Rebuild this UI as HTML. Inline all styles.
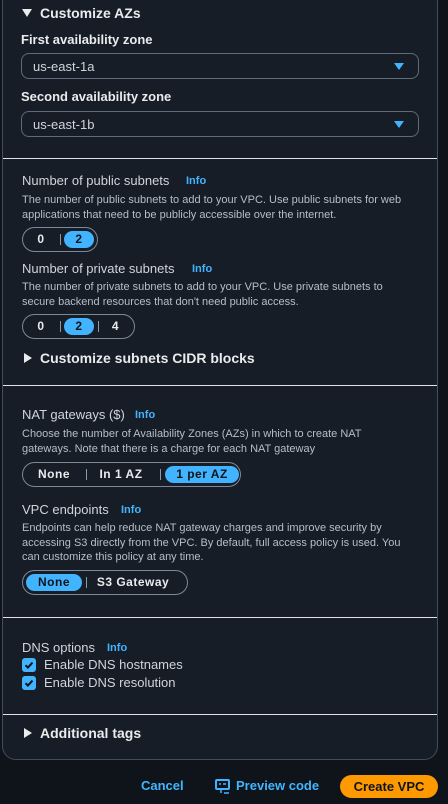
<!DOCTYPE html>
<html><head><style>
*{margin:0;padding:0;box-sizing:border-box}
body{width:448px;height:804px;background:#0f141a;font-family:"Liberation Sans",sans-serif;color:#d1d5db;position:relative;overflow:hidden}
.panel{position:absolute;left:2px;top:-20px;width:436px;height:780px;background:#161d26;border:1px solid #414d5c;border-radius:0 0 14px 14px}
.a{position:absolute;white-space:nowrap}
.h{font-weight:bold;font-size:14px;color:#e9ebed}
.lb{font-weight:bold;font-size:13px;color:#e9ebed}
.t{font-size:13px;color:#d1d5db}
.d{font-size:11px;color:#b6bec9;line-height:14.5px}
.info{font-size:11px;font-weight:bold;color:#42b4ff}
.sel{position:absolute;left:21px;width:398px;height:26px;border:1px solid #5f6b7a;border-radius:8px;font-size:13px;color:#d1d5db;padding:5px 11px}
.sel i{position:absolute;right:14px;top:9px;width:0;height:0;border-left:5px solid transparent;border-right:5px solid transparent;border-top:7px solid #42b4ff}
.div{position:absolute;left:3px;width:434px;height:1px;background:#dfe3e8}
.tg{position:absolute;height:25px;border:1px solid #7d8998;border-radius:13px}
.seg{position:absolute;top:3px;height:17px;font-size:12px;font-weight:bold;color:#e9ebed;text-align:center;line-height:17px;border-radius:9px;letter-spacing:.5px}
.on{background:#42b4ff;color:#0f141a}
.bar{position:absolute;top:6px;width:1px;height:11px;background:#8d99a8}
.cb{position:absolute;left:22px;width:14px;height:14px;background:#42b4ff;border-radius:3px}
.tri-d{position:absolute;width:0;height:0;border-left:5px solid transparent;border-right:5px solid transparent;border-top:8px solid #e9ebed}
.tri-r{position:absolute;width:0;height:0;border-top:5px solid transparent;border-bottom:5px solid transparent;border-left:8px solid #e9ebed}
</style></head><body>
<div class="panel"></div>
<div class="tri-d" style="left:22px;top:9px"></div>
<div class="a h" style="left:40px;top:5px">Customize AZs</div>
<div class="a lb" style="left:21px;top:32px">First availability zone</div>
<div class="sel" style="top:53px">us-east-1a<i></i></div>
<div class="a lb" style="left:21px;top:89px">Second availability zone</div>
<div class="sel" style="top:111px">us-east-1b<i></i></div>
<div class="div" style="top:158px"></div>

<div class="a t" style="left:22px;top:173px">Number of public subnets</div>
<div class="a info" style="left:186px;top:175px">Info</div>
<div class="a d" style="left:22px;top:193px">The number of public subnets to add to your VPC. Use public subnets for web<br>applications that need to be publicly accessible over the internet.</div>
<div class="tg" style="left:22px;top:227px;width:76px"><div class="seg" style="left:8px;width:20px">0</div><div class="bar" style="left:37px"></div><div class="seg on" style="left:41px;width:30px">2</div></div>

<div class="a t" style="left:22px;top:261px">Number of private subnets</div>
<div class="a info" style="left:192px;top:263px">Info</div>
<div class="a d" style="left:22px;top:280px">The number of private subnets to add to your VPC. Use private subnets to<br>secure backend resources that don't need public access.</div>
<div class="tg" style="left:22px;top:314px;width:113px"><div class="seg" style="left:8px;width:20px">0</div><div class="bar" style="left:37px"></div><div class="seg on" style="left:41px;width:30px">2</div><div class="bar" style="left:75px"></div><div class="seg" style="left:80px;width:25px">4</div></div>

<div class="tri-r" style="left:24px;top:353px"></div>
<div class="a h" style="left:40px;top:350px">Customize subnets CIDR blocks</div>
<div class="div" style="top:385px"></div>

<div class="a t" style="left:22px;top:407px">NAT gateways ($)</div>
<div class="a info" style="left:135px;top:409px">Info</div>
<div class="a d" style="left:22px;top:427px">Choose the number of Availability Zones (AZs) in which to create NAT<br>gateways. Note that there is a charge for each NAT gateway</div>
<div class="tg" style="left:22px;top:462px;width:219px"><div class="seg" style="left:8px;width:46px">None</div><div class="bar" style="left:63px"></div><div class="seg" style="left:70px;width:56px">In 1 AZ</div><div class="bar" style="left:137px"></div><div class="seg on" style="left:142px;width:74px">1 per AZ</div></div>

<div class="a t" style="left:22px;top:502px">VPC endpoints</div>
<div class="a info" style="left:121px;top:504px">Info</div>
<div class="a d" style="left:22px;top:521px">Endpoints can help reduce NAT gateway charges and improve security by<br>accessing S3 directly from the VPC. By default, full access policy is used. You<br>can customize this policy at any time.</div>
<div class="tg" style="left:22px;top:570px;width:166px"><div class="seg on" style="left:3px;width:56px">None</div><div class="bar" style="left:63px"></div><div class="seg" style="left:70px;width:80px">S3 Gateway</div></div>
<div class="div" style="top:617px"></div>

<div class="a t" style="left:22px;top:640px">DNS options</div>
<div class="a info" style="left:107px;top:642px">Info</div>
<div class="cb" style="top:658px"><svg width="14" height="14"><path d="M3.5 7.2l2.4 2.4 4.6-5" stroke="#0f141a" stroke-width="2" fill="none"/></svg></div>
<div class="a t" style="left:44px;top:657px">Enable DNS hostnames</div>
<div class="cb" style="top:676px"><svg width="14" height="14"><path d="M3.5 7.2l2.4 2.4 4.6-5" stroke="#0f141a" stroke-width="2" fill="none"/></svg></div>
<div class="a t" style="left:44px;top:675px">Enable DNS resolution</div>
<div class="div" style="top:714px"></div>

<div class="tri-r" style="left:24px;top:728px"></div>
<div class="a h" style="left:40px;top:725px">Additional tags</div>

<div class="a" style="left:141px;top:778px;font-size:13px;font-weight:bold;color:#42b4ff">Cancel</div>
<svg class="a" style="left:215px;top:779px" width="15" height="16"><rect x="1" y="1" width="13" height="9" rx="1" fill="none" stroke="#42b4ff" stroke-width="2"/><path d="M4 5h2M8 5h3M6 10v4M9 14h5" stroke="#42b4ff" stroke-width="1.5"/></svg>
<div class="a" style="left:236px;top:778px;font-size:13px;font-weight:bold;color:#42b4ff">Preview code</div>
<div class="a" style="left:340px;top:775px;width:98px;height:23px;background:#ff9900;border-radius:12px;font-size:13px;font-weight:bold;color:#0f141a;text-align:center;line-height:23px">Create VPC</div>
</body></html>
